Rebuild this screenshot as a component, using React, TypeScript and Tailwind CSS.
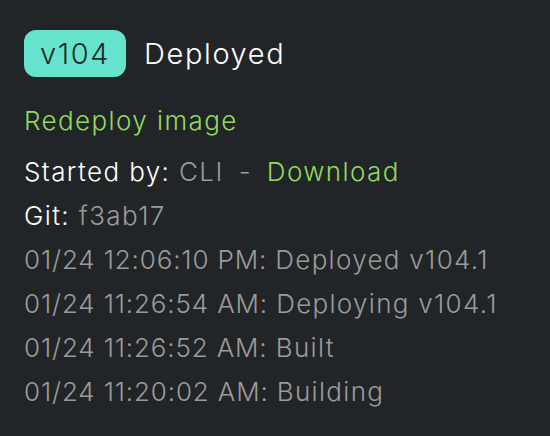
const events = [
  { time: "01/24 12:06:10 PM:", text: "Deployed v104.1" },
  { time: "01/24 11:26:54 AM:", text: "Deploying v104.1" },
  { time: "01/24 11:26:52 AM:", text: "Built" },
  { time: "01/24 11:20:02 AM:", text: "Building" },
];

export default function App() {
  return (
    <div className="h-[436px] w-[550px] overflow-hidden bg-[#222527] px-6 pt-[30px] font-['Inter',sans-serif] font-light">
      <div className="flex items-center gap-[18px] tracking-[1.6px]">
        <span className="flex h-[47px] items-center rounded-[12px] bg-[#66e3cc] px-[16px] text-[29px] text-[#1f2a28]">
          v104
        </span>
        <span className="text-[29px] text-white">Deployed</span>
      </div>
      <div className="mt-[22px] whitespace-nowrap text-[26px] leading-[44px] tracking-[1.4px]">
        <a href="#" className="text-[#92da5c]">
          Redeploy image
        </a>
        <div className="mt-[7px] text-white">
          Started by: <span className="text-[#9b9b9b]">CLI</span>
          <span className="px-[15px] text-[#9b9b9b]">-</span>
          <a href="#" className="text-[#92da5c]">
            Download
          </a>
        </div>
        <div className="text-white">
          Git: <span className="text-[#9b9b9b]">f3ab17</span>
        </div>
        {events.map((e) => (
          <div key={e.time} className="text-[#9b9b9b]">
            <span className="tracking-[0.85px]">{e.time} </span>
            <span className="tracking-[1.3px]">{e.text}</span>
          </div>
        ))}
      </div>
    </div>
  );
}
